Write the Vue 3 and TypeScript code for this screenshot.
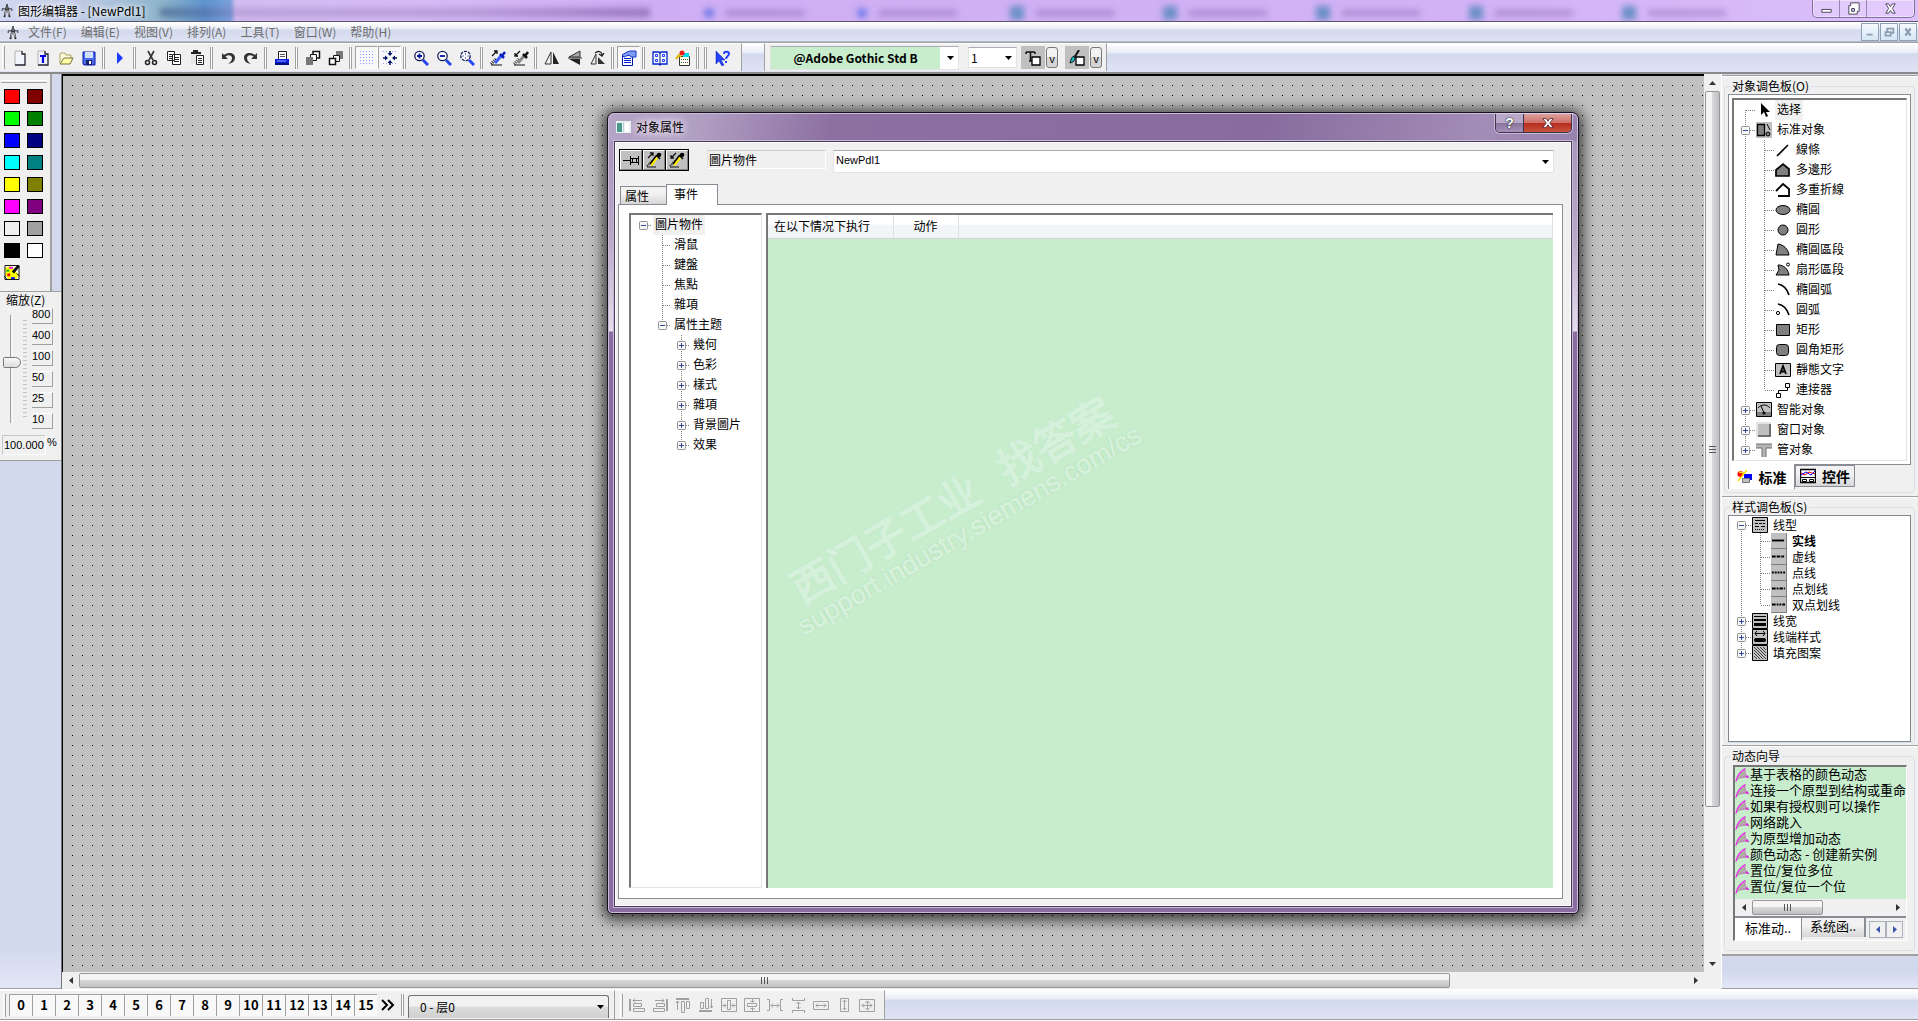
<script setup lang="ts">
import { ref } from 'vue'

interface TreeRow {
  cells: string[]
  label: string
  icon?: string
  selected?: boolean
  bold?: boolean
}

const menus = ['文件(F)', '编辑(E)', '视图(V)', '排列(A)', '工具(T)', '窗口(W)', '帮助(H)']

const icons: Record<string, string> = {
  compass: '<path d="M2.500 8V5.500h11V8" stroke="#222" fill="none"/><path d="M8 0v3" stroke="#111" stroke-width="1.500"/><path d="M7 6L5 15M9 6l2 9" stroke="#222" stroke-width="2"/><path d="M7 7l-1.500 6M9 7l1.500 6" stroke="#fff" stroke-width=".8"/><circle cx="8" cy="4.500" r="2" fill="#222"/><circle cx="8" cy="4.500" r=".8" fill="#ddd"/>',
  new: '<path d="M3 1h7l3 3v11H3z" fill="#f4f5fb"/><path d="M3 15V1h7" stroke="#b4b4b4" fill="none"/><path d="M10 1v3h3v11H3" stroke="#223" stroke-width="1.3" fill="none"/>',
  newText: '<path d="M3 1h7l3 3v11H3z" fill="#f0f3fd"/><path d="M3 15V1h7" stroke="#b4b4b4" fill="none"/><path d="M10 1v3h3v11H3" stroke="#223" stroke-width="1.3" fill="none"/><path d="M5 6h6M8 6v7" stroke="#0000e0" stroke-width="2.2"/>',
  open: '<path d="M2 13V4l1-1h4l1 2h5v3" fill="#ffffe0" stroke="#a9a25c"/><path d="M2 14l4-6h9l-3 6z" fill="#ffffa8" stroke="#77713b"/>',
  save: '<path d="M2 2h12v13H3l-1-1z" fill="#4a6cf0" stroke="#1017b0"/><path d="M4 2h8v6H4z" fill="#cfe0ff"/><path d="M5 10h6v5H5z" fill="#1a1f66"/><path d="M8 11h2v3H8z" fill="#fff"/>',
  play: '<path d="M5 2v12l6-6z" fill="#1a3cff"/>',
  cut: '<path d="M5 1l5 9M11 1L6 10" stroke="#333" stroke-width="1.6"/><circle cx="4.500" cy="12.500" r="2" fill="none" stroke="#222" stroke-width="1.5"/><circle cx="11.500" cy="12.500" r="2" fill="none" stroke="#222" stroke-width="1.5"/>',
  copy: '<path d="M1.500 1.500h7v9h-7zM6.500 4.500h8v10h-8z" fill="#fff" stroke="#222"/><path d="M3 4.500h3M3 6.500h3M3 8.500h3M8 7.500h5M8 9.500h5M8 11.500h5" stroke="#222"/>',
  paste: '<path d="M2 2h9v12H2z" fill="#e6e6e6"/><path d="M2 3h10M4 1h5" stroke="#222" stroke-width="2"/><path d="M7.500 5.500h7v9h-7z" fill="#fff" stroke="#222"/><path d="M9 8.500h4M9 10.500h4M9 12.500h4" stroke="#222"/>',
  undo: '<path d="M2 3v6h6L5.500 6.500C9 4 12 6 12 8s-1 4-4 6c5-1 7-3 7-6.500S10 1 4 5z" fill="#333"/>',
  redo: '<path d="M14 3v6H8l2.500-2.500C7 4 4 6 4 8s1 4 4 6C3 13 1 11 1 7.500S6 1 12 5z" fill="#333"/>',
  print: '<path d="M4.500 1.500h8v8h-8z" fill="#fff" stroke="#222"/><path d="M6 4.500h5M6 6.500h5" stroke="#555"/><path d="M1 9h14v5H1z" fill="#0a1fe0"/><path d="M1 14h14" stroke="#001078" stroke-width="2"/><path d="M3 11h9" stroke="#8aa0ff"/>',
  front: '<path d="M8 1.500h6.500v6.500H8z" fill="#fff" stroke="#111" stroke-width="1.5"/><path d="M5.500 4.500h6v6h-6z" fill="#f4f4f4" stroke="#111"/><path d="M1 7h7v8H1z" fill="#777"/>',
  back: '<path d="M8 1h7v8H8z" fill="#777"/><path d="M5.500 5.500h6v6h-6z" fill="#f4f4f4" stroke="#111"/><path d="M1.500 8.500h6v6h-6z" fill="#fff" stroke="#111" stroke-width="1.5"/>',
  grid: '<path d="M1 1.500h15M1 4.500h15M1 7.500h15M1 10.500h15M1 13.500h15" stroke="#8c9cff" stroke-dasharray="1 2"/>',
  snap: '<path d="M1 1.500h15M1 13.500h15" stroke="#8c9cff" stroke-dasharray="1 2"/><path d="M8 1v4M8 11v4M1 8h4M11 8h4" stroke="#001060" stroke-width="1.500"/><path d="M5.500 3h5L8 6zM5.500 13h5L8 10zM3 5.500v5L6 8zM13 5.500v5L10 8z" fill="#001060"/>',
  zoomIn: '<path d="M10 10l5 5" stroke="#2447ee" stroke-width="3"/><circle cx="6.500" cy="6" r="4.700" fill="#fff" stroke="#111a55" stroke-width="1.3"/><path d="M4 6h5M6.500 3.500v5" stroke="#0a18a0" stroke-width="1.8"/>',
  zoomOut: '<path d="M10 10l5 5" stroke="#2447ee" stroke-width="3"/><circle cx="6.500" cy="6" r="4.700" fill="#fff" stroke="#111a55" stroke-width="1.3"/><path d="M4 6h5" stroke="#0a18a0" stroke-width="1.8"/>',
  zoomFit: '<path d="M10 10l5 5" stroke="#2447ee" stroke-width="3"/><circle cx="6.500" cy="6" r="4.700" fill="#fff" stroke="#111a55" stroke-width="1.3" stroke-dasharray="3 1"/><path d="M3 6h2M8 6h2M6.500 3v2M6.500 7v2" stroke="#6070d0"/>',
  pick: '<path d="M2 6l5-5M4 1h3v3" stroke="#111" fill="none" stroke-width="1.3"/><path d="M1 14l5-5" stroke="#222" stroke-dasharray="1 1" stroke-width="3"/><path d="M5 13l6-7" stroke="#3a5cff" stroke-width="3"/><path d="M10 4l4 4M12 6l3-4" stroke="#0a1ec0" stroke-width="2.5"/><path d="M1 15h11" stroke="#111"/>',
  drop: '<path d="M7 1L2 6M2 3v3h3" stroke="#111" fill="none" stroke-width="1.3"/><path d="M1 14l5-5" stroke="#444" stroke-dasharray="1 1" stroke-width="3"/><path d="M5 13l6-7" stroke="#888" stroke-width="3"/><path d="M10 4l4 4M12 6l3-4" stroke="#111" stroke-width="2.5"/><path d="M1 15h11" stroke="#111"/>',
  mirrorH: '<path d="M7 2v12H1z" fill="#f0f0f0" stroke="#333"/><path d="M9 2v12h6z" fill="#222"/>',
  mirrorV: '<path d="M13 1v6H2z" fill="#aaa" stroke="#333"/><path d="M13 15V9H2z" fill="#222"/><path d="M1 8h14" stroke="#222"/>',
  rotate: '<path d="M1 14L6 4v10z" fill="#eee" stroke="#333"/><path d="M8 14V7l7 7z" fill="#333"/><path d="M5 3c4-3 7-1 7 2M14 3l-2 3-3-2" fill="none" stroke="#222" stroke-width="1.3"/>',
  props: '<path d="M1.500 5.500h10v10h-10z" fill="#fff" stroke="#001aa0"/><path d="M3 8.500h7M3 10.500h7M3 12.500h7" stroke="#0020d0"/><path d="M1 5l5-3 3-1h6v6h-5L8 5 3 7z" fill="#7f9cf5" stroke="#173bd0"/>',
  library: '<path d="M1 2h6l1 1 1-1h6v12H9l-1 1-1-1H1z" fill="#f6f8ff" stroke="#0022cc" stroke-width="1.3"/><path d="M8 3v11" stroke="#001a66"/><path d="M3.500 4.500h2v2h-2zM3.500 9.500h2v2h-2zM10.500 4.500h2v2h-2zM10.500 9.500h2v2h-2z" fill="none" stroke="#2040ff"/>',
  macro: '<path d="M4.500 6.500h10v9h-10z" fill="#fffff0" stroke="#333"/><path d="M8 3h6v4H8z" fill="#00d7ee"/><path d="M6 9.500h8M6 12.500h8" stroke="#555" stroke-dasharray="1 1"/><circle cx="7" cy="3" r="2.500" fill="#f01818"/><path d="M1 9l3-4 2 2" fill="none" stroke="#e0b000" stroke-width="2"/>',
  help: '<path d="M2 1v13l3-3 3 5 2-1-3-5h4z" fill="#2344ff" stroke="#0b1ba0" stroke-width=".5"/><path d="M10 4c0-3 5-3 5 0 0 2-3 2-3 5" fill="none" stroke="#2344ff" stroke-width="2"/><path d="M11 11h2v2h-2z" fill="#2344ff"/>',
  textColor: '<path d="M1 2h9M5.500 2v9M1 2v2M10 2v2M4 11h3" stroke="#111" stroke-width="1.5" fill="none"/><path d="M7 7h8v8H7z" fill="#fff" stroke="#000" stroke-width="1.3"/>',
  brushColor: '<path d="M10 0L5 8" stroke="#111" stroke-width="2"/><path d="M5 6c2 2 1 6-4 7 1-3 1-6 4-7z" fill="#17b9c4" stroke="#111"/><path d="M7 7h8v8H7z" fill="#fff" stroke="#000" stroke-width="1.3"/>',
  palette: '<path d="M0 0h16v16H0z" fill="#fff"/><path d="M1 3l5-2 4 3 5 6-2 5H4L1 11z" fill="#ff0"/><path d="M15 1L9 8" stroke="#000" stroke-width="3"/><path d="M5 2h4v2H5z" fill="#f0f"/><path d="M2 5h3v2H2z" fill="#0a0"/><path d="M3 9h3v3H3z" fill="#f00"/><path d="M7 13h4v2H7z" fill="#00f"/><path d="M0 12l3 4M13 9l3 3" stroke="#000"/><path d="M.5.5h15v15H.5z" fill="none" stroke="#000"/>',
  pin: '<path d="M0 8.500h7M7.500 4v9M9.500 6v5M13.500 6v5M15.500 4v9M8 6.500h7M8 10.500h7" stroke="#000" fill="none"/>',
  pickY: '<path d="M2 6l5-5M4 1h3v3" stroke="#111" fill="none" stroke-width="1.3"/><path d="M1 14l5-5" stroke="#222" stroke-dasharray="1 1" stroke-width="2"/><path d="M5 13l6-8" stroke="#ffee00" stroke-width="3"/><path d="M4 12l6-8M10 3l4 4M12 5l3-3" stroke="#000" stroke-width="1.500"/><circle cx="13" cy="3" r="2.200"/><path d="M1 15h9" stroke="#111"/>',
  dropY: '<path d="M7 1L2 6M2 3v3h3" stroke="#111" fill="none" stroke-width="1.3"/><path d="M1 14l5-5" stroke="#222" stroke-dasharray="1 1" stroke-width="2"/><path d="M5 13l6-8" stroke="#ffee00" stroke-width="3"/><path d="M4 12l6-8M10 3l4 4M12 5l3-3" stroke="#000" stroke-width="1.500"/><circle cx="13" cy="3" r="2.200"/><path d="M1 15h9" stroke="#111"/>',
  arrow: '<path d="M5 1v12l3-3 2 5 2-1-2-4h4z" fill="#000"/>',
  standard: '<path d="M0 0h16v16H0z" fill="#c0c0c0"/><path d="M1.500 2.500h7v11h-7z" fill="#808080" stroke="#000" stroke-width="1.3"/><path d="M11 2l3 6" stroke="#000"/><circle cx="12" cy="12" r="2" fill="#808080" stroke="#000"/>',
  line: '<path d="M2 14L13 3" stroke="#000" stroke-width="1.6"/>',
  polygon: '<path d="M1 14V8l7-6 6 5v7z" fill="#808080" stroke="#000" stroke-width="1.7"/>',
  polyline: '<path d="M1 9l7-7 6 5v7H3" fill="none" stroke="#000" stroke-width="1.8"/>',
  ellipse: '<ellipse cx="8" cy="8" rx="7" ry="4.500" fill="#808080" stroke="#000"/>',
  circle: '<circle cx="8" cy="8" r="5" fill="#808080" stroke="#000"/>',
  ellSeg: '<path d="M1 13L3 2c6 1 10 5 11 11z" fill="#808080" stroke="#000"/>',
  pieSeg: '<path d="M1 13l3-5-1-5c6 0 10 4 11 10z" fill="#808080" stroke="#000"/><circle cx="13" cy="2.500" r="1.500" fill="#fff" stroke="#000"/>',
  ellArc: '<path d="M3 2c6 1 9 5 11 11" fill="none" stroke="#000" stroke-width="1.7"/>',
  circArc: '<path d="M3 2c6 1 9 5 11 11" fill="none" stroke="#000" stroke-width="1.7"/><circle cx="3" cy="11" r="1.600" fill="none" stroke="#000"/>',
  rect: '<path d="M1.500 2.500h13v11h-13z" fill="#808080" stroke="#000"/>',
  rrect: '<rect x="1.500" y="2.500" width="12" height="11" rx="3" fill="#808080" stroke="#000"/>',
  staticText: '<path d="M.500 1.500h15v13H.500z" fill="#c0c0c0" stroke="#000"/><path d="M5 12l3-8 3 8M6 9.500h4" fill="none" stroke="#000" stroke-width="1.800"/>',
  connector: '<path d="M10.500 1.500h4v4h-4zM1.500 11.500h4v4h-4z" fill="#fff" stroke="#000"/><path d="M3.500 11V8.500h9V6" fill="none" stroke="#000"/>',
  smart: '<path d="M.500 .500h15v14H.500z" fill="#c0c0c0" stroke="#000"/><path d="M1 10h14v4H1z" fill="#808080"/><path d="M2 6c3-4 9-4 12 0M8 11L5 4" fill="none" stroke="#000"/><circle cx="8" cy="11" r="1.500"/>',
  windowObj: '<path d="M1 1h14v14H1z" fill="#c0c0c0"/><path d="M1 15V1h14" fill="none" stroke="#e4e4e4" stroke-width="2"/><path d="M14 2v12H2" fill="none" stroke="#555" stroke-width="1.500"/>',
  pipe: '<path d="M0 2h16v4H0zM6 6h4v9H6z" fill="#b4b4b4"/><path d="M0 2h16M0 6h6v9M10 15V6h6" fill="none" stroke="#707070"/>',
  tabStd: '<circle cx="3.500" cy="5" r="3" fill="#f00"/><path d="M7 5h8v6H7z" fill="#00f"/><path d="M10 1L1 12M7 4l-5-1" stroke="#ffe000" stroke-width="1.5"/><path d="M5.500 9.500h7v4h-7z" fill="#c0c0c0" stroke="#777"/>',
  tabCtl: '<path d="M.500 1.500h15v13H.500z" fill="#fff" stroke="#000" stroke-width="1.3"/><path d="M1 5l4 2 4-3 6 2" fill="none" stroke="#f00"/><path d="M1 7l5-3 5 3 4-4" fill="none" stroke="#00f"/><path d="M1 9.500h14M2.500 11.500h4v2h-4zM9.500 11.500h4v2h-4z" fill="none" stroke="#000"/>',
  lineType: '<path d="M.500 .500h15v15H.500z" fill="#c0c0c0" stroke="#000"/><path d="M3 3.500h10" stroke="#000"/><path d="M3 6.500h10" stroke="#000" stroke-dasharray="3 1"/><path d="M3 9.500h10" stroke="#000" stroke-dasharray="4 2"/><path d="M3 12.500h10" stroke="#000" stroke-dasharray="1 1"/>',
  solid: '<path d="M1 8h13" stroke="#000" stroke-width="2"/>',
  dash: '<path d="M1 8h13" stroke="#000" stroke-width="2" stroke-dasharray="4 1"/>',
  dot: '<path d="M1 8h14" stroke="#000" stroke-width="2" stroke-dasharray="2 1"/>',
  dashDot: '<path d="M1 8h14" stroke="#000" stroke-width="2" stroke-dasharray="4 1 2 1"/>',
  dashDotDot: '<path d="M1 8h14" stroke="#000" stroke-width="2" stroke-dasharray="4 1 2 1 2 1"/>',
  lineWidth: '<path d="M.500 .500h15v15H.500z" fill="#c0c0c0" stroke="#000"/><path d="M2 3.500h12" stroke="#000"/><path d="M2 7h12" stroke="#000" stroke-width="2"/><path d="M2 11.500h12" stroke="#000" stroke-width="3"/>',
  lineEnd: '<path d="M.500 .500h15v15H.500z" fill="#c0c0c0" stroke="#000"/><path d="M3 4.500h10M5 2L3 4.500 5 7M11 2l2 2.500L11 7" fill="none" stroke="#000"/><path d="M4 11h8" stroke="#000" stroke-width="4" stroke-linecap="round"/>',
  fillPat: '<path d="M.500 .500h15v15H.500z" fill="#c0c0c0" stroke="#000"/><path d="M2 2l12 12M5 2l9 9M8 2l6 6M11 2l3 3M2 5l9 9M2 8l6 6M2 11l3 3" stroke="#222" stroke-width=".8"/>',
  wizard: '<path d="M1 15C2 9 5 4 11 1c-1 4 0 7 4 10-5-1-10 0-14 4z" fill="#b3aaa8"/><path d="M1 15C2 9 5 4 11 1" fill="none" stroke="#f020f0" stroke-width="1.3"/><path d="M11 1c-1 4 0 7 4 10-4-1-7-1-9 0" fill="none" stroke="#d050d0" stroke-width=".7"/><path d="M11 10l4 1-2-3z" fill="#e020e0"/>',
  alLeft: '<path d="M1 2v12" stroke-width="2"/><path d="M4 3.500h9M6 1.500l-2 2 2 2M4.500 6.500h8v3h-8zM4.500 11.500h11v3h-11z"/>',
  alRight: '<path d="M15 2v12" stroke-width="2"/><path d="M3 3.500h9M10 1.500l2 2-2 2M4.500 6.500h8v3h-8zM1.500 11.500h11v3h-11z"/>',
  alTop: '<path d="M1 2h13" stroke-width="2"/><path d="M2.500 13V4M1 6l1.500-2L4 6M6.500 4.500h3v11h-3zM11.500 4.500h3v7h-3z"/>',
  alBottom: '<path d="M1 14h13" stroke-width="2"/><path d="M2.500 5.500h3v6h-3zM7.500 1.500h3v10h-3zM13.500 2v9M12 9l1.500 2L15 9"/>',
  cenH: '<path d="M.500 1.500h15v13H.500zM6.500 3.500h3v9h-3zM1 8.500h4M11 8.500h4M3 6.500l2 2-2 2M13 6.500l-2 2 2 2"/>',
  cenV: '<path d="M.500 1.500h15v13H.500zM3.500 6.500h9v3h-9zM8.500 2v3M8.500 11v3M6.500 4l2 1 2-1M6.500 12l2-1 2 1"/>',
  spH: '<path d="M0 2.500h2.500v11H0M16 2.500h-2.500v11H16M4 8.500h8M6 6.500l-2 2 2 2M10 6.500l2 2-2 2"/>',
  spV: '<path d="M2.500 1v2.500h12V1M2.500 16v-2.500h12V16M8.500 5v7M6.500 7l2-2 2 2M6.500 10l2 2 2-2"/>',
  sameW: '<path d="M.500 4.500h15v8H.500zM3 8.500h10M5 6.500l-2 2 2 2M11 6.500l2 2-2 2"/>',
  sameH: '<path d="M4.500 1.500h8v13h-8zM8.500 3v10M6.500 5l2-2 2 2M6.500 11l2 2 2-2"/>',
  sameWH: '<path d="M.500 2.500h15v12H.500zM3 8.500h10M8.500 4v9M5 6.500l-2 2 2 2M11 6.500l2 2-2 2M6.500 6l2-2 2 2M6.500 11l2 2 2-2"/>'
}

const tools = [
  'new', 'newText', 'open', 'save', '|', 'play', '|', 'cut', 'copy', 'paste', '|', 'undo', 'redo', '|',
  'print', '|', 'front', 'back', '|', 'grid', 'snap', '|', 'zoomIn', 'zoomOut', 'zoomFit', '|',
  'pick', 'drop', '|', 'mirrorH', 'mirrorV', 'rotate', '|', 'props', '|', 'library', 'macro', '|', '|', 'help'
]
const pressed = new Set(['grid', 'snap', 'props'])
const alignTools = ['alLeft', 'alRight', 'alTop', 'alBottom', 'cenH', 'cenV', 'spH', 'spV', 'sameW', 'sameH', 'sameWH']

const colors = [
  '#ff0000', '#800000', '#00ff00', '#008000', '#0000ff', '#000080', '#00ffff', '#008080',
  '#ffff00', '#808000', '#ff00ff', '#800080', '#f0f0f0', '#a0a0a0', '#000000', '#ffffff'
]
const zoomSteps = ['800', '400', '100', '50', '25', '10']
const zoomPos = ref(57)
const zoomText = ref('100.000')

/* cell flags: u/d = line up/down, r = line to the right, + / - = expander box */
const objectTree: TreeRow[] = [
  { cells: ['dr'], label: '选择', icon: 'arrow', selected: true },
  { cells: ['udr-'], label: '标准对象', icon: 'standard' },
  ...(
    [
      ['線條', 'line'], ['多邊形', 'polygon'], ['多重折線', 'polyline'], ['橢圓', 'ellipse'], ['圓形', 'circle'],
      ['橢圓區段', 'ellSeg'], ['扇形區段', 'pieSeg'], ['橢圓弧', 'ellArc'], ['圓弧', 'circArc'], ['矩形', 'rect'],
      ['圓角矩形', 'rrect'], ['靜態文字', 'staticText']
    ] as const
  ).map(([label, icon]) => ({ cells: ['ud', 'udr'], label, icon })),
  { cells: ['ud', 'ur'], label: '連接器', icon: 'connector' },
  { cells: ['udr+'], label: '智能对象', icon: 'smart' },
  { cells: ['udr+'], label: '窗口对象', icon: 'windowObj' },
  { cells: ['ur+'], label: '管对象', icon: 'pipe' }
]
const styleTree: TreeRow[] = [
  { cells: ['dr-'], label: '线型', icon: 'lineType' },
  { cells: ['ud', 'udr'], label: '实线', icon: 'solid', bold: true },
  { cells: ['ud', 'udr'], label: '虚线', icon: 'dash' },
  { cells: ['ud', 'udr'], label: '点线', icon: 'dot' },
  { cells: ['ud', 'udr'], label: '点划线', icon: 'dashDot' },
  { cells: ['ud', 'ur'], label: '双点划线', icon: 'dashDotDot' },
  { cells: ['udr+'], label: '线宽', icon: 'lineWidth' },
  { cells: ['udr+'], label: '线端样式', icon: 'lineEnd' },
  { cells: ['ur+'], label: '填充图案', icon: 'fillPat' }
]
const plates = new Set(['solid', 'dash', 'dot', 'dashDot', 'dashDotDot'])
const eventTree: TreeRow[] = [
  { cells: ['r-'], label: '圖片物件', selected: true },
  { cells: ['', 'udr'], label: '滑鼠' },
  { cells: ['', 'udr'], label: '鍵盤' },
  { cells: ['', 'udr'], label: '焦點' },
  { cells: ['', 'udr'], label: '雜項' },
  { cells: ['', 'ur-'], label: '属性主题' },
  { cells: ['', '', 'udr+'], label: '幾何' },
  { cells: ['', '', 'udr+'], label: '色彩' },
  { cells: ['', '', 'udr+'], label: '樣式' },
  { cells: ['', '', 'udr+'], label: '雜項' },
  { cells: ['', '', 'udr+'], label: '背景圖片' },
  { cells: ['', '', 'ur+'], label: '效果' }
]
const wizards = [
  '基于表格的颜色动态', '连接一个原型到结构或重命', '如果有授权则可以操作', '网络跳入',
  '为原型增加动态', '颜色动态 - 创建新实例', '置位/复位多位', '置位/复位一个位'
]
const layers = Array.from({ length: 16 }, (_, i) => i)
const ghosts = Array.from({ length: 7 }, (_, i) => i)
</script>

<template>
  <div class="app">
    <header class="titlebar">
      <div class="glass" aria-hidden="true">
        <i class="streak"></i>
        <div class="ghosts">
          <span v-for="g in ghosts" :key="g" class="ghost" :class="{ small: g < 2 }"><b></b><i></i></span>
        </div>
      </div>
      <div class="caption">
        <svg class="ic" viewBox="0 0 16 16" v-html="icons.compass"></svg>
        <h1>图形编辑器 - [NewPdl1]</h1>
        <div class="winbtns">
          <button aria-label="最小化"><svg viewBox="0 0 16 16"><path d="M3 9h10v3H3z" fill="#fff" stroke="#444058" /></svg></button>
          <button aria-label="还原"><svg viewBox="0 0 16 16"><path d="M5 2h9v9h-2v3H3V5h2z" fill="#fff" stroke="#444058" /><path d="M6 8h3v3H6z" fill="#d8c0f0" stroke="#444058" /></svg></button>
          <button class="wide" aria-label="关闭"><svg viewBox="0 0 16 16"><path d="M3 3h3l2 3 2-3h3l-3 5 3 5h-3l-2-3-2 3H3l3-5z" fill="#fff" stroke="#444058" /></svg></button>
        </div>
      </div>
    </header>

    <nav class="menubar">
      <svg class="ic" viewBox="0 0 16 16" v-html="icons.compass"></svg>
      <button v-for="m in menus" :key="m" class="menu">{{ m }}</button>
      <div class="mdi">
        <button aria-label="最小化"><svg viewBox="0 0 16 16"><path d="M4 10h7v2H4z" fill="#8d9db0" /></svg></button>
        <button aria-label="还原"><svg viewBox="0 0 16 16"><path d="M6 7V4h7v5h-2M4 8h6v4H4z" fill="none" stroke="#8d9db0" stroke-width="2" /></svg></button>
        <button aria-label="关闭"><svg viewBox="0 0 16 16"><path d="M5 4l6 8M11 4l-6 8" stroke="#8d9db0" stroke-width="2.500" /></svg></button>
      </div>
    </nav>

    <div class="toolrow">
      <div class="bar main-tools">
        <i class="grip"></i>
        <template v-for="(t, i) in tools" :key="i">
          <i v-if="t === '|'" class="sep"></i>
          <button v-else class="tool" :class="{ on: pressed.has(t) }" :aria-label="t">
            <svg class="ic" viewBox="0 0 16 16" v-html="icons[t]"></svg>
          </button>
        </template>
      </div>
      <div class="bar font-tools">
        <div class="combo font">
          <select aria-label="字体"><option>@Adobe Gothic Std B</option></select>
          <svg class="tri" viewBox="0 0 7 4"><path d="M0 0h7L3.500 4z" /></svg>
        </div>
        <div class="combo size">
          <select aria-label="字号"><option>1</option></select>
          <svg class="tri" viewBox="0 0 7 4"><path d="M0 0h7L3.500 4z" /></svg>
        </div>
        <div class="split">
          <button class="face" aria-label="文字颜色"><svg class="ic" viewBox="0 0 16 16" v-html="icons.textColor"></svg></button>
          <button class="vee">v</button>
        </div>
        <div class="split">
          <button class="face" aria-label="填充颜色"><svg class="ic" viewBox="0 0 16 16" v-html="icons.brushColor"></svg></button>
          <button class="vee">v</button>
        </div>
      </div>
    </div>

    <main class="work">
      <aside class="left">
        <section class="palette">
          <i class="hgrip"></i>
          <div class="swatches">
            <button v-for="c in colors" :key="c" class="swatch" :style="{ background: c }" :aria-label="c"></button>
            <button class="swatch pal" aria-label="调色板"><svg viewBox="0 0 16 16" v-html="icons.palette"></svg></button>
          </div>
        </section>
        <section class="zoom">
          <label class="zoom-title" for="zoom-range">缩放(Z)</label>
          <div class="zoom-body">
            <input id="zoom-range" v-model="zoomPos" type="range" min="0" max="100" />
            <i class="ticks"></i>
            <div class="steps">
              <button v-for="z in zoomSteps" :key="z">{{ z }}</button>
            </div>
          </div>
          <div class="zoom-value">
            <input v-model="zoomText" type="text" aria-label="缩放百分比" /><span>%</span>
          </div>
        </section>
      </aside>

      <div class="desk">
        <div class="canvas">
          <section class="dialog" role="dialog" aria-label="对象属性">
            <header class="dlg-title">
              <svg class="dlg-icon" viewBox="0 0 15 12"><path d="M0 0h15v12H0z" fill="#e9f1ef" /><path d="M1 2h5v9H1z" fill="#4b9890" /><path d="M9 2h4v9H9z" fill="#fff" /><path d="M7 1h1v10H7z" fill="#b7d6de" /></svg>
              <h2>对象属性</h2>
              <div class="dlg-btns">
                <button class="ask" aria-label="帮助">?</button>
                <button class="close" aria-label="关闭"><svg viewBox="0 0 16 16"><path d="M2 3h4l2 3 2-3h4l-4 5 4 5h-4l-2-3-2 3H2l4-5z" fill="#fff" stroke="#5b2a38" /></svg></button>
              </div>
            </header>
            <div class="client">
              <div class="dlg-tools">
                <div class="trio">
                  <button aria-label="固定"><svg class="ic" viewBox="0 0 16 16" v-html="icons.pin"></svg></button>
                  <button aria-label="复制属性"><svg class="ic" viewBox="0 0 16 16" v-html="icons.pickY"></svg></button>
                  <button aria-label="分配属性"><svg class="ic" viewBox="0 0 16 16" v-html="icons.dropY"></svg></button>
                </div>
                <label class="kind" for="object-name">圖片物件</label>
                <div class="combo name">
                  <select id="object-name"><option>NewPdl1</option></select>
                  <svg class="tri" viewBox="0 0 7 4"><path d="M0 0h7L3.500 4z" /></svg>
                </div>
              </div>
              <div class="dlg-tabs" role="tablist">
                <button role="tab" aria-selected="false">属性</button>
                <button role="tab" aria-selected="true" class="active">事件</button>
              </div>
              <div class="page">
                <ul class="tree events">
                  <li v-for="(r, i) in eventTree" :key="i">
                    <svg v-for="(c, j) in r.cells" :key="j" class="cell" viewBox="0 0 19 20">
                      <path v-if="c.includes('u')" d="M9.500 0v10" class="dots" />
                      <path v-if="c.includes('d')" d="M9.500 10v10" class="dots" />
                      <path v-if="c.includes('r')" d="M10 10.500h8" class="dots" />
                      <template v-if="/[+-]/.test(c)">
                        <rect x="5.500" y="6.500" width="8" height="8" rx="1" class="box" />
                        <path d="M7 10.500h5" class="sign" />
                        <path v-if="c.includes('+')" d="M9.500 8v5" class="sign" />
                      </template>
                    </svg>
                    <span class="lbl" :class="{ sel: r.selected }">{{ r.label }}</span>
                  </li>
                </ul>
                <table class="list">
                  <colgroup><col class="c1" /><col class="c2" /><col /></colgroup>
                  <thead><tr><th>在以下情况下执行</th><th>动作</th><th></th></tr></thead>
                  <tbody><tr><td colspan="3"></td></tr></tbody>
                </table>
              </div>
            </div>
            <div class="watermark"><b>西门子工业&nbsp;&nbsp;&nbsp;找答案</b><span>support.industry.siemens.com/cs</span></div>
          </section>
        </div>
        <div class="vscroll">
          <button aria-label="向上滚动"><svg viewBox="0 0 7 4"><path d="M0 4h7L3.500 0z" /></svg></button>
          <i class="thumb"></i><i class="rest"></i>
          <button aria-label="向下滚动"><svg viewBox="0 0 7 4"><path d="M0 0h7L3.500 4z" /></svg></button>
        </div>
        <div class="hscroll">
          <button aria-label="向左滚动"><svg viewBox="0 0 4 7"><path d="M4 0v7L0 3.500z" /></svg></button>
          <i class="thumb"></i><i class="rest"></i>
          <button aria-label="向右滚动"><svg viewBox="0 0 4 7"><path d="M0 0v7l4-3.500z" /></svg></button>
        </div>
      </div>

      <aside class="right">
        <section>
          <fieldset>
            <legend>对象调色板(O)</legend>
            <div class="tabpage">
              <ul class="tree objects">
                <li v-for="(r, i) in objectTree" :key="i">
                  <svg v-for="(c, j) in r.cells" :key="j" class="cell" viewBox="0 0 19 20">
                    <path v-if="c.includes('u')" d="M9.500 0v10" class="dots" />
                    <path v-if="c.includes('d')" d="M9.500 10v10" class="dots" />
                    <path v-if="c.includes('r')" d="M10 10.500h10" class="dots" />
                    <template v-if="/[+-]/.test(c)">
                      <rect x="5.500" y="6.500" width="8" height="8" rx="1" class="box" />
                      <path d="M7 10.500h5" class="sign" />
                      <path v-if="c.includes('+')" d="M9.500 8v5" class="sign" />
                    </template>
                  </svg>
                  <svg class="ic" viewBox="0 0 16 16" v-html="icons[r.icon ?? '']"></svg>
                  <span class="lbl" :class="{ sel: r.selected }">{{ r.label }}</span>
                </li>
              </ul>
            </div>
            <div class="obj-tabs" role="tablist">
              <button role="tab" class="active"><svg class="ic" viewBox="0 0 16 16" v-html="icons.tabStd"></svg>标准</button>
              <button role="tab"><svg class="ic" viewBox="0 0 16 16" v-html="icons.tabCtl"></svg>控件</button>
            </div>
          </fieldset>
        </section>
        <section>
          <fieldset>
            <legend>样式调色板(S)</legend>
            <ul class="tree styles">
              <li v-for="(r, i) in styleTree" :key="i">
                <svg v-for="(c, j) in r.cells" :key="j" class="cell" viewBox="0 2 19 16">
                  <path v-if="c.includes('u')" d="M9.500 0v10" class="dots" />
                  <path v-if="c.includes('d')" d="M9.500 10v10" class="dots" />
                  <path v-if="c.includes('r')" d="M10 10.500h10" class="dots" />
                  <template v-if="/[+-]/.test(c)">
                    <rect x="5.500" y="6.500" width="8" height="8" rx="1" class="box" />
                    <path d="M7 10.500h5" class="sign" />
                    <path v-if="c.includes('+')" d="M9.500 8v5" class="sign" />
                  </template>
                </svg>
                <svg class="ic" :class="{ plate: plates.has(r.icon ?? '') }" viewBox="0 0 16 16" v-html="icons[r.icon ?? '']"></svg>
                <span class="lbl" :class="{ bold: r.bold }">{{ r.label }}</span>
              </li>
            </ul>
          </fieldset>
        </section>
        <section class="dyn">
          <fieldset>
            <legend>动态向导</legend>
            <div class="wizard">
              <ul>
                <li v-for="w in wizards" :key="w"><svg class="ic" viewBox="0 0 16 16" v-html="icons.wizard"></svg><span>{{ w }}</span></li>
              </ul>
              <div class="hscroll mini">
                <button aria-label="向左滚动"><svg viewBox="0 0 4 7"><path d="M4 0v7L0 3.500z" /></svg></button>
                <i class="thumb"></i><i class="rest"></i>
                <button aria-label="向右滚动"><svg viewBox="0 0 4 7"><path d="M0 0v7l4-3.500z" /></svg></button>
              </div>
              <div class="wiz-tabs" role="tablist">
                <button role="tab" class="active">标准动..</button>
                <button role="tab" class="other">系统函..</button>
                <button class="nav" aria-label="上一页"><svg viewBox="0 0 4 7"><path d="M4 0v7L0 3.500z" /></svg></button>
                <button class="nav" aria-label="下一页"><svg viewBox="0 0 4 7"><path d="M0 0v7l4-3.500z" /></svg></button>
              </div>
            </div>
          </fieldset>
        </section>
      </aside>
    </main>

    <footer class="bottom">
      <div class="bar layer-bar">
        <i class="grip"></i>
        <button v-for="l in layers" :key="l" class="layer">{{ l }}</button>
        <button class="more" aria-label="更多图层"><svg viewBox="0 0 14 12"><path d="M1 1l5 5-5 5M7 1l5 5-5 5" fill="none" stroke="#000" stroke-width="2" /></svg></button>
        <i class="sep"></i>
        <div class="combo layer-pick">
          <select aria-label="当前图层"><option>0 - 层0</option></select>
          <svg class="tri" viewBox="0 0 7 4"><path d="M0 0h7L3.500 4z" /></svg>
        </div>
      </div>
      <div class="bar align-bar">
        <i class="grip"></i>
        <button v-for="a in alignTools" :key="a" class="tool" :aria-label="a" disabled>
          <svg class="ic dim" viewBox="0 0 16 16" v-html="icons[a]"></svg>
        </button>
      </div>
    </footer>
  </div>
</template>

<style>
body {
  margin: 0;
  background: #fff;
}
</style>

<style scoped>
.app {
  display: flex;
  flex-direction: column;
  min-height: 100vh;
  overflow: hidden;
  font: 12px/16px "Noto Sans CJK SC", "Liberation Sans", sans-serif;
  color: #000;
  background: #f0f0f0;
}
* { box-sizing: border-box; }
button, input, select { font: inherit; color: inherit; margin: 0; padding: 0; border: 0; background: none; border-radius: 0; }
button { display: flex; align-items: center; justify-content: center; flex: none; }
select { appearance: none; outline: 0; }
ul { list-style: none; margin: 0; padding: 0; }
i { display: block; flex: none; }
svg { display: block; flex: none; }
.ic { width: 16px; height: 16px; }

.titlebar {
  display: grid;
  height: 22px;
  border-bottom: 1px solid #5d5470;
  overflow: hidden;
  background: linear-gradient(90deg, #d3d8f2 0, #bfc9e4 80px, #8fb6cc 160px, #5f94cc 205px, #7ba0dc 230px, #d2bdf1 236px, #d6bbf6 420px, #cfaef3 620px, #d2b2f5 1500px, #dbbffb 100%);
}
.titlebar > * { grid-area: 1 / 1; min-width: 0; }
.glass { display: flex; align-items: center; padding-top: 4px; filter: blur(3px); }
.streak { width: 490px; height: 9px; margin-left: 160px; background: linear-gradient(90deg, rgba(40, 60, 110, .5), rgba(90, 60, 130, .2) 70px, rgba(90, 60, 130, .25) 320px, rgba(70, 40, 110, .4)); }
.ghosts { display: flex; margin-left: 54px; }
.ghost { display: flex; align-items: center; gap: 12px; width: 153px; }
.ghost b { width: 14px; height: 14px; background: #6c90c8; }
.ghost.small b { width: 10px; height: 10px; border-radius: 5px; background: #6c78e8; }
.ghost i { width: 78px; height: 6px; background: rgba(80, 40, 120, .28); }
.caption { display: flex; align-items: center; }
.caption .ic { width: 14px; }
h1 { flex: 1; margin: 0 0 0 4px; font-size: 12px; font-weight: 400; text-shadow: 0 0 6px #fff, 0 0 6px #fff; }
.winbtns { display: flex; align-self: flex-start; height: 18px; margin-right: 3px; border: 1px solid #83719c; border-top: 0; border-radius: 0 0 5px 5px; background: rgba(240, 225, 255, .35); box-shadow: inset 0 0 0 1px rgba(255, 255, 255, .4); }
.winbtns button { width: 27px; border-right: 1px solid #9a86b4; }
.winbtns .wide { width: 47px; border-right: 0; }
.winbtns svg { width: 15px; height: 15px; }

.menubar {
  display: flex;
  height: 20px;
  padding-left: 6px;
  color: #6d6d6d;
  border-top: 1px solid #fff;
  border-bottom: 1px solid #b4bccd;
  background: linear-gradient(#fff 0, #e9ecf5 6px, #d3d9ec 7px, #dee3f3 100%);
}
.menubar .ic { width: 14px; margin: 2px 1px 0 0; }
.menu { padding: 0 7px; }
.mdi { display: flex; gap: 1px; margin: 0 1px 0 auto; }
.mdi button { width: 18px; border: 1px solid #8fa1b8; background: linear-gradient(#f5f9fd, #d5e6f5); }
.mdi svg { width: 14px; height: 14px; }

.toolrow {
  display: flex;
  gap: 22px;
  height: 32px;
  padding-bottom: 1px;
  border-top: 1px solid #a0a0a0;
  border-bottom: 2px solid #8a8a8a;
  background: linear-gradient(#fff 0, #e9ecf5 10px, #d3d9ec 11px, #dfe4f5 100%);
}
.bar { display: flex; align-items: center; flex: none; background: #f0f0f0; border-top: 1px solid #fff; border-right: 1px solid #a0a0a0; }
.grip { width: 3px; height: 23px; border-right: 1px solid #a0a0a0; border-left: 1px solid #fff; margin: 0 3px 0 2px; }
.sep { width: 3px; height: 22px; margin: 0 3px 0 2px; border-left: 1px solid #a0a0a0; border-right: 1px solid #a0a0a0; background: #fff; }
.tool { width: 23px; height: 23px; }
.tool.on { border: 1px solid #a0a0a0; border-right-color: #fff; border-bottom-color: #fff; background: #f8f8fb; }
.main-tools { padding-right: 8px; }
.font-tools { padding: 0 4px 0 5px; border-left: 1px solid #a0a0a0; }
.combo { display: grid; align-items: center; background: #fff; }
.combo select, .combo .tri { grid-area: 1 / 1; }
.tri { width: 7px; height: 4px; justify-self: end; margin-right: 4px; pointer-events: none; }
.combo.font { width: 189px; height: 24px; margin-right: 9px; border: 1px solid #e3e3e3; border-top-color: #abadb3; }
.combo.font select { height: 22px; margin-right: 18px; text-align: center; text-align-last: center; background: #c7edcc; font: bold 12px/20px "Noto Sans CJK SC", sans-serif; }
.combo.size { width: 49px; height: 21px; margin-right: 4px; border: 1px solid #e3e3e3; border-top-color: #abadb3; }
.combo.size select { padding-left: 2px; }
.split { display: flex; align-items: center; margin-right: 7px; }
.split:last-child { margin-right: 0; }
.face { width: 24px; height: 23px; background: #c0c0c0; }
.vee { width: 12px; height: 21px; margin-left: 1px; border: 1px solid #777; border-radius: 3px; background: linear-gradient(#f2f2f2 50%, #d5d5d5 50%); font-size: 11px; }

.work { display: flex; flex: 1; min-height: 0; background: #f0f0f0; }
.left { display: flex; flex-direction: column; width: 61px; flex: none; background: linear-gradient(#d3d9ec calc(100% - 40px), #e2e7f8); border-bottom: 1px solid #a0a0a0; }
.palette { width: 52px; height: 217px; border-right: 2px solid #a0a0a0; background: #f0f0f0; }
.hgrip { width: 46px; height: 3px; margin: 6px 0 6px 1px; border-bottom: 1px solid #a0a0a0; border-top: 1px solid #fff; }
.swatches { display: grid; grid-template-columns: 16px 16px; gap: 7px; padding-left: 4px; }
.swatch { width: 16px; height: 15px; border: 1px solid #000; }
.pal { border: 0; }
.pal svg { width: 16px; height: 15px; }
.zoom { height: 170px; border-top: 1px solid #a0a0a0; border-bottom: 1px solid #a0a0a0; background: #f0f0f0; }
.zoom-title { display: block; height: 16px; padding-left: 6px; line-height: 16px; }
.zoom-body { display: flex; height: 127px; }
#zoom-range { appearance: none; writing-mode: vertical-lr; direction: rtl; width: 18px; height: 108px; margin: 7px 2px 0 3px; background: linear-gradient(90deg, transparent 7px, #a0a0a0 7px, #a0a0a0 8px, #e7e7e7 8px, #fff 10px, transparent 10px); }
#zoom-range::-webkit-slider-thumb { appearance: none; width: 18px; height: 11px; border: 1px solid #777; border-radius: 2px 7px 7px 2px; background: linear-gradient(#f8f8f8, #dcdcdc); }
.ticks { width: 4px; height: 98px; margin: 12px 5px 0 0; background: repeating-linear-gradient(#c4c4c4 0, #c4c4c4 1px, transparent 1px, transparent 4px); }
.steps { display: flex; flex-direction: column; gap: 5px; }
.steps button { width: 21px; height: 16px; align-items: flex-start; justify-content: flex-start; font: 11px/11px "Liberation Sans", sans-serif; border-right: 1px solid #a0a0a0; border-bottom: 1px solid #a0a0a0; border-top: 1px solid #fff; }
.zoom-value { display: flex; font: 11px/14px "Liberation Sans", sans-serif; }
.zoom-value input { width: 44px; height: 20px; margin: 0 1px 0 2px; padding-left: 1px; border: 1px solid #fff; border-top-color: #c8c8c8; border-left-color: #c8c8c8; }

.desk { display: grid; grid-template: minmax(0, 1fr) 17px / minmax(0, 1fr) 17px; flex: 1; min-width: 0; border-left: 1px solid #777; }
.canvas {
  position: relative;
  border-left: 1px solid #000;
  border-top: 2px solid #000;
  background-color: #c0c0c0;
  background-image: conic-gradient(from 270deg at 1px 1px, #000 90deg, transparent 0);
  background-size: 10px 10px;
  background-position: 9px 9px;
}
.vscroll, .hscroll { display: flex; background: #f0f0f0; }
.vscroll { flex-direction: column; }
.vscroll button { height: 17px; }
.hscroll button { width: 17px; }
.vscroll svg, .hscroll svg { fill: #333; }
.vscroll svg { width: 7px; height: 4px; }
.hscroll svg { width: 4px; height: 7px; }
.thumb { border: 1px solid #979797; border-radius: 2px; }
.vscroll .thumb { flex: 716 0 0; margin: 0 1px; background: linear-gradient(#555 0 0) center / 7px 1px no-repeat, linear-gradient(#555 0 0) center calc(50% + 3px) / 7px 1px no-repeat, linear-gradient(#555 0 0) center calc(50% - 3px) / 7px 1px no-repeat, linear-gradient(90deg, #f5f5f5 45%, #d8d8db 50%, #c0c0c4); }
.vscroll .rest { flex: 148 0 0; }
.hscroll .thumb { flex: 1370 0 0; margin: 1px 0; background: linear-gradient(#555 0 0) center / 1px 7px no-repeat, linear-gradient(#555 0 0) calc(50% + 3px) center / 1px 7px no-repeat, linear-gradient(#555 0 0) calc(50% - 3px) center / 1px 7px no-repeat, linear-gradient(#f5f5f5 45%, #d8d8db 50%, #c0c0c4); }
.hscroll .rest { flex: 237 0 0; }
.hscroll { grid-column: 1; }

.dialog {
  position: absolute;
  inset: 36px 125px 58px 544px;
  display: flex;
  flex-direction: column;
  padding: 0 6px 6px;
  border: 1px solid #16101e;
  border-radius: 7px 7px 5px 5px;
  background: linear-gradient(#a693b9, #b7a6c6 120px, #e5deed 218px, transparent 219px) 0 0 / 6px 100% no-repeat, linear-gradient(#a693b9, #b7a6c6 120px, #e5deed 218px, transparent 219px) 100% 0 / 6px 100% no-repeat, #8a6ea1;
  box-shadow: inset 0 0 0 1px #cbbdd8, 0 2px 14px 4px rgba(0, 0, 0, .7);
}
.dlg-title { display: flex; align-items: center; height: 28px; margin: 0 -5px; padding: 0 0 2px 7px; flex: none; border-radius: 6px 6px 0 0; background: linear-gradient(100deg, #b5a4c5 0, #b19fc2 90px, #8c70a2 220px, #886c9f 650px, #a28db6 860px, #9882ae 100%); border-top: 1px solid #cbbdd8; }
.dlg-icon { width: 15px; height: 12px; }
h2 { flex: 1; margin: 0 0 0 5px; font-size: 12px; font-weight: 400; text-shadow: 0 0 7px #eee6f5, 0 0 7px #eee6f5, 0 0 12px #eee6f5; }
.dlg-btns { display: flex; align-self: flex-start; height: 19px; margin-right: 5px; border: 1px solid #3f334e; border-top: 0; border-radius: 0 0 5px 5px; overflow: hidden; box-shadow: 0 0 0 1px rgba(230, 220, 240, .6); }
.ask { width: 28px; border-right: 1px solid #3f334e; color: #fff; font: bold 14px/16px "Liberation Sans", sans-serif; text-shadow: 0 0 1px #222, 0 0 2px #222; background: linear-gradient(#b8a9c8 50%, #86729a 50%, #a793ba); }
.close { width: 47px; background: linear-gradient(#dba09c, #cf6f66 48%, #b52b1d 50%, #c8543c); }
.close svg { width: 14px; height: 14px; }
.client { display: flex; flex-direction: column; flex: 1; min-height: 0; padding: 7px 8px 7px 3px; border: 1px solid #4a3b5a; outline: 1px solid #c7b9d5; background: #f0f0f0; box-shadow: inset 0 0 0 1px #fff; }
.dlg-tools { display: flex; align-items: flex-start; padding-left: 1px; }
.trio { display: flex; height: 22px; border: 1px solid #000; background: #000; gap: 1px; }
.trio button { width: 22px; background: #c0c0c0; border: 1px solid #fff; border-right-color: #808080; border-bottom-color: #808080; }
.kind { width: 119px; height: 19px; margin: 1px 7px 0 18px; padding-left: 1px; line-height: 17px; border: 1px solid #fff; border-top-color: #c9ccd5; border-left-color: #e0e0e6; }
.combo.name { flex: 1; height: 23px; margin: 1px 9px 0 0; border: 1px solid #e3e3e3; border-top-color: #abadb3; }
.combo.name select { padding: 0 0 4px 2px; font: 11px/16px "Liberation Sans", sans-serif; }
.dlg-tabs { display: flex; align-items: flex-end; height: 21px; margin: 11px 0 -1px 2px; z-index: 1; }
.dlg-tabs button { width: 47px; height: 19px; padding-left: 4px; justify-content: flex-start; border: 1px solid #898c95; background: linear-gradient(#f2f2f2 40%, #d6d6d6); }
.dlg-tabs .active { width: 52px; height: 21px; margin-left: -1px; padding: 0 0 2px 7px; border-bottom: 0; background: #fff; }
.page { display: flex; flex: 1; min-height: 0; gap: 4px; padding: 8px 9px 10px 10px; border: 1px solid #898c95; background: #fff; }
.tree li { display: flex; align-items: center; height: 20px; }
.cell { width: 19px; height: 20px; }
.dots { stroke: #808080; stroke-dasharray: 1 1; fill: none; }
.box { fill: #f8f8f8; stroke: #919191; }
.sign { stroke: #2f4a9c; }
.tree .ic { margin-left: 1px; }
.lbl { height: 20px; padding: 0 2px; line-height: 18px; white-space: nowrap; }
.tree .ic + .lbl { margin-left: 3px; }
.lbl.sel { background: #f0f0f0; }
.bold { font-weight: 700; }
.events { width: 133px; flex: none; padding: 0 0 0 3px; border: 1px solid #e3e3e3; border-left: 2px solid #777; border-top: 2px solid #777; }
.list { flex: 1; height: 100%; border-collapse: collapse; table-layout: fixed; border: 2px solid #777; border-right: 0; border-bottom: 0; background: #c7edcc; }
.list .c1 { width: 126px; }
.list .c2 { width: 65px; }
.list th { height: 24px; padding: 0 0 0 6px; font-weight: 400; text-align: left; line-height: 16px; background: linear-gradient(#fff 40%, #f3f5f8 45%, #f1f3f6); border-right: 1px solid #dcdfe4; border-bottom: 1px solid #d5d5d5; }
.list th + th { padding-left: 20px; }
.list td { height: 100%; padding: 0; }
.watermark { position: absolute; left: 351px; top: 399px; transform: translate(-50%, -50%) rotate(-30deg); display: flex; flex-direction: column; align-items: center; white-space: nowrap; color: #d6f1db; -webkit-text-stroke: 1px #d6f1db; text-shadow: 0 0 2px #94c49e; pointer-events: none; }
.watermark b { font-size: 42px; line-height: 42px; font-weight: 400; -webkit-text-stroke-width: 2px; }
.watermark span { font: 27px/32px "Liberation Sans", sans-serif; }

.right { display: flex; flex-direction: column; width: 197px; flex: none; border-left: 1px solid #fff; border-bottom: 1px solid #a0a0a0; background: linear-gradient(#d3d9ec calc(100% - 16px), #e2e7f8); }
.right section { padding: 1px 3px 2px 2px; border-top: 1px solid #a0a0a0; background: #f0f0f0; box-shadow: inset 0 1px #fff; }
.right section:first-child { margin-top: 1px; padding-bottom: 3px; }
.right .dyn { border-bottom: 2px solid #a0a0a0; padding-bottom: 3px; }
fieldset { min-width: 0; margin: 1px 0 0; padding: 0 3px 3px; border: 1px solid #d5dfe5; border-radius: 4px; }
legend { height: 16px; margin-left: 2px; padding: 0 2px; line-height: 16px; }
.tabpage { padding: 3px; border: 1px solid #898c95; background: #fff; }
.objects { padding-left: 2px; border: 1px solid #e3e3e3; border-left: 2px solid #777; border-top: 2px solid #777; }
.obj-tabs { display: flex; align-items: flex-start; height: 25px; margin-top: -1px; }
.obj-tabs button { gap: 6px; width: 60px; height: 22px; margin-top: 1px; font: bold 14px/18px "Noto Sans CJK SC", sans-serif; border: 1px solid #898c95; background: linear-gradient(#f2f2f2 40%, #d6d6d6); }
.obj-tabs .active { width: 67px; height: 25px; margin-top: 0; border-top: 0; border-bottom: 0; background: #fff; }
.styles { min-height: 227px; padding: 1px 0 0 3px; border: 1px solid #828790; background: #fff; margin: 0 0 -3px; }
.styles li { height: 16px; }
.styles .cell { height: 16px; }
.styles .lbl { height: 16px; line-height: 15px; }
.plate { background: #c0c0c0; border-right: 1px solid #808080; border-bottom: 1px solid #808080; }
.wizard { margin: 1px 4px 6px 5px; border: 1px solid #fff; border-left: 2px solid #777; border-top: 2px solid #777; overflow: hidden; }
.wizard ul { height: 132px; background: #c7edcc; }
.wizard li { display: flex; height: 16px; font-size: 13px; line-height: 14px; white-space: nowrap; }
.wizard li .ic { width: 15px; }
.mini { height: 17px; }
.mini .thumb { flex: 70 0 0; }
.mini .rest { flex: 66 0 0; }
.wiz-tabs { display: flex; align-items: flex-start; height: 24px; border-top: 2px solid #898c95; }
.wiz-tabs button { height: 22px; font-size: 13px; }
.wiz-tabs .active { width: 67px; padding-bottom: 2px; background: #fff; border-right: 1px solid #898c95; }
.wiz-tabs .other { width: 64px; height: 19px; padding-bottom: 3px; border-right: 2px solid #898c95; background: linear-gradient(#f2f2f2 40%, #d6d6d6); }
.wiz-tabs .nav { width: 17px; height: 17px; margin-top: 3px; border: 1px solid #acb0bb; background: #f0f0f0; }
.wiz-tabs .other + .nav { margin-left: 3px; }
.nav svg { width: 4px; height: 7px; fill: #3a55b0; }

.bottom {
  display: flex;
  height: 32px;
  border-top: 1px solid #fff;
  border-bottom: 1px solid #fff;
  background: linear-gradient(#fff 0, #e9ecf5 9px, #d3d9ec 10px, #dfe4f5 100%);
  box-shadow: inset 0 -1px #a0a0a0;
}
.bottom .bar { height: 29px; }
.layer-bar .grip { margin-left: 3px; }
.layer { width: 23px; height: 22px; padding-bottom: 1px; font: bold 13px/18px "Noto Sans CJK SC", sans-serif; border-left: 1px solid #a0a0a0; border-top: 1px solid #a0a0a0; background: #f8f8f8; }
.more { width: 22px; }
.more svg { width: 14px; height: 12px; }
.layer-pick { width: 201px; height: 23px; margin: 2px 5px 0 1px; border: 1px solid #707070; border-bottom: 0; border-radius: 3px 3px 0 0; background: linear-gradient(#f2f2f2 45%, #ddd 50%, #cfcfcf); }
.layer-pick select { padding-left: 11px; }
.align-bar { padding: 0 6px 0 4px; }
.align-bar .grip { margin: 0 2px 0 1px; }
.dim { fill: none; stroke: #a0a0a0; }
</style>
